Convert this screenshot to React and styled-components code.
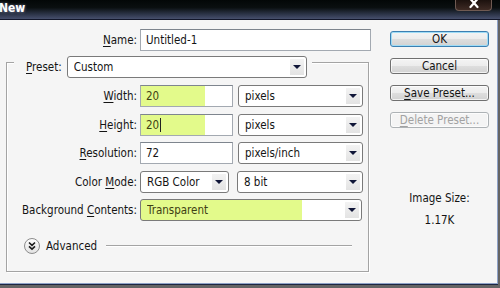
import styled, { createGlobalStyle } from 'styled-components'

const FONT = `"DejaVu Sans Condensed", "Liberation Sans", sans-serif`

const GlobalStyle = createGlobalStyle`
  html, body {
    margin: 0;
    padding: 0;
    background: #616161;
  }
  * { box-sizing: border-box; }
`

const Caret = () => <CaretBar />

const ChevronCircle = () => (
  <svg width="16" height="16" viewBox="0 0 16 16">
    <defs>
      <linearGradient id="adv" x1="0" y1="0" x2="0" y2="1">
        <stop offset="0" stopColor="#ffffff" />
        <stop offset="1" stopColor="#e2e2e2" />
      </linearGradient>
    </defs>
    <circle cx="8" cy="8" r="7.5" fill="url(#adv)" stroke="#8c8c8c" />
    <path d="M5 4.5 L8 7.3 L11 4.5 M5 8.3 L8 11.1 L11 8.3" fill="none" stroke="#1c1c1c" strokeWidth="1.6" />
  </svg>
)

const CloseGlyph = () => (
  <svg width="10" height="9" viewBox="0 0 10 9">
    <path d="M1.5 -1 L8.5 7 M8.5 -1 L1.5 7" stroke="#fff" strokeWidth="2.2" strokeLinecap="round" />
  </svg>
)

const Select = ({ value, width, fill }) => (
  <SelectBox $w={width} $fill={fill}>
    <SelectValue $hl={!!fill}>{value}</SelectValue>
    <ArrowBox><Triangle /></ArrowBox>
  </SelectBox>
)

const App = () => (
  <Window>
    <GlobalStyle />
    <TitleBar>
      <Title>New</Title>
      <CloseButton><CloseGlyph /></CloseButton>
    </TitleBar>
    <Body>
      <LeftCol>
        <Row>
          <Label $w={131}><u>N</u>ame:</Label>
          <Input $w={231}>Untitled-1</Input>
        </Row>

        <Group>
          <GroupHeader>
            <Label><u>P</u>reset:</Label>
            <Select value="Custom" width={240} />
          </GroupHeader>

          <Fields>
            <Label><u>W</u>idth:</Label>
            <Pair $gap={5}>
              <Input $w={93} $fill={65} $hl>20</Input>
              <Select value="pixels" width={125} />
            </Pair>

            <Label><u>H</u>eight:</Label>
            <Pair $gap={5}>
              <Input $w={93} $fill={65} $hl>20<Caret /></Input>
              <Select value="pixels" width={125} />
            </Pair>

            <Label><u>R</u>esolution:</Label>
            <Pair $gap={5}>
              <Input $w={93}>72</Input>
              <Select value="pixels/inch" width={125} />
            </Pair>

            <Label>Color <u>M</u>ode:</Label>
            <Pair $gap={8}>
              <Select value="RGB Color" width={89} />
              <Select value="8 bit" width={126} />
            </Pair>

            <Label>Background <u>C</u>ontents:</Label>
            <Select value="Transparent" width={222} fill={162} />
          </Fields>

          <AdvancedRow>
            <ChevronCircle />
            <AdvancedText>Advanced</AdvancedText>
            <Rule />
          </AdvancedRow>
        </Group>
      </LeftCol>

      <RightCol>
        <Button $default>OK</Button>
        <Button>Cancel</Button>
        <Button><u>S</u>ave Preset...</Button>
        <Button $disabled><u>D</u>elete Preset...</Button>
        <SizeInfo>
          <span>Image Size:</span>
          <span>1.17K</span>
        </SizeInfo>
      </RightCol>
    </Body>
  </Window>
)

const Window = styled.div`
  width: 500px;
  height: 288px;
  display: flex;
  flex-direction: column;
  overflow: hidden;
  background: #646464;
  font-family: ${FONT};
  font-size: 11.5px;
  color: #141414;
`

const TitleBar = styled.div`
  height: 20px;
  flex: none;
  display: flex;
  justify-content: space-between;
  align-items: flex-start;
  border-bottom: 1px solid #12162a;
  background: linear-gradient(#030707 0%, #0a0f10 40%, #2c3448 75%, #464f6c 100%);
`

const Title = styled.span`
  margin-left: -1px;
  line-height: 17px;
  font-weight: bold;
  font-size: 12px;
  color: #fff;
  text-shadow: 0 0 3px rgba(200, 210, 255, 0.6);
`

const CloseButton = styled.div`
  width: 37px;
  height: 11px;
  margin-right: 8px;
  display: flex;
  justify-content: center;
  align-items: flex-start;
  border: 1px solid #6f5a52;
  border-top: none;
  border-radius: 0 0 4px 4px;
  background: linear-gradient(#1c110e, #3e2a24);
`

const Body = styled.div`
  width: 498px;
  height: 264px;
  flex: none;
  display: flex;
  gap: 19px;
  padding: 9px 0 0 6px;
  background: #f5f5f5;
  border-right: 1px solid #8ea2c8;
  border-bottom: 1px solid #8ea2c8;
  box-shadow: 0 1px 0 #1d2642;
`

const LeftCol = styled.div`
  width: 365px;
  display: flex;
  flex-direction: column;
`

const Row = styled.div`
  display: flex;
  align-items: center;
  gap: 3px;
  height: 21px;
`

const Label = styled.label`
  ${({ $w }) => ($w ? `width: ${$w}px;` : '')}
  flex: none;
  text-align: right;
  white-space: nowrap;
  line-height: 14px;

  u { text-underline-offset: 2px; }
`

const Input = styled.div`
  width: ${({ $w }) => $w}px;
  height: ${({ $h }) => $h || 22}px;
  flex: none;
  display: flex;
  align-items: center;
  padding-left: 5px;
  border: 1px solid #a3a9b1;
  border-top-color: #7e858e;
  color: ${({ $hl }) => ($hl ? '#3f3f14' : '#141414')};
  background: ${({ $fill }) =>
    $fill ? `linear-gradient(to right, #e3fa8b ${$fill - 1}px, #fff ${$fill - 1}px)` : '#fff'};
`

const CaretBar = styled.span`
  display: inline-block;
  width: 1px;
  height: 14px;
  margin-left: 1px;
  background: #222;
`

const Group = styled.div`
  width: 363px;
  margin-top: 12px;
  display: flex;
  flex-direction: column;
  padding-bottom: 17px;
  border: 1px solid #a4a4a4;
  box-shadow: inset 1px 1px 0 #fff, 1px 1px 0 #fff;
`

const GroupHeader = styled.div`
  align-self: flex-start;
  display: flex;
  align-items: center;
  gap: 5px;
  height: 22px;
  margin: -7px 0 0 7px;
  padding: 0 5px 0 12px;
  background: #f5f5f5;
`

const Fields = styled.div`
  display: grid;
  grid-template-columns: 130px auto;
  grid-auto-rows: 22px;
  column-gap: 3px;
  row-gap: 6.5px;
  align-items: center;
  margin-top: 7px;
`

const Pair = styled.div`
  display: flex;
  gap: ${({ $gap }) => $gap}px;
`

const SelectBox = styled.div`
  width: ${({ $w }) => $w}px;
  height: 22px;
  display: flex;
  align-items: center;
  padding-left: 6px;
  border: 1px solid #7a7a7a;
  border-radius: 3px;
  background: ${({ $fill }) =>
    $fill ? `linear-gradient(to right, #e3fa8b ${$fill - 1}px, #fff ${$fill - 1}px)` : '#fff'};
`

const SelectValue = styled.span`
  flex: 1;
  white-space: nowrap;
  overflow: hidden;
  color: ${({ $hl }) => ($hl ? '#3f3f14' : '#141414')};
`

const ArrowBox = styled.span`
  width: 14px;
  height: 16px;
  margin-right: 2px;
  display: flex;
  align-items: center;
  justify-content: center;
  background: linear-gradient(#f3f3f3, #e3e3e3);
`

const Triangle = styled.span`
  width: 0;
  height: 0;
  border-left: 4px solid transparent;
  border-right: 4px solid transparent;
  border-top: 4px solid #101638;
`

const AdvancedRow = styled.div`
  display: flex;
  align-items: center;
  gap: 6px;
  height: 16px;
  margin-top: 17px;
  padding: 0 16px 0 17px;
`

const AdvancedText = styled.span`
  line-height: 14px;
`

const Rule = styled.div`
  flex: 1;
  height: 2px;
  margin-left: 3px;
  border-top: 1px solid #a4a4a4;
  border-bottom: 1px solid #fff;
`

const RightCol = styled.div`
  width: 99px;
  padding-top: 2px;
  display: flex;
  flex-direction: column;
  gap: 11px;
`

const Button = styled.div`
  height: 16px;
  display: flex;
  align-items: center;
  justify-content: center;
  line-height: 14px;
  border: 1px solid ${({ $default, $disabled }) =>
    $default ? '#3c7fb1' : $disabled ? '#adb2b5' : '#707070'};
  border-radius: 3px;
  color: ${({ $disabled }) => ($disabled ? '#a2a2a2' : '#141414')};
  background: ${({ $disabled }) =>
    $disabled
      ? '#f4f4f4'
      : 'linear-gradient(#f4f4f4 0%, #ececec 50%, #dedede 51%, #d2d2d2 100%)'};
  box-shadow: ${({ $default }) =>
    $default ? 'inset 0 0 0 1px #9fdcf6' : 'inset 0 0 0 1px rgba(255,255,255,0.7)'};

  u { text-underline-offset: 2px; }
`

const SizeInfo = styled.div`
  margin-top: 52px;
  display: flex;
  flex-direction: column;
  align-items: center;
  gap: 8px;
  line-height: 14px;
`

export default App
